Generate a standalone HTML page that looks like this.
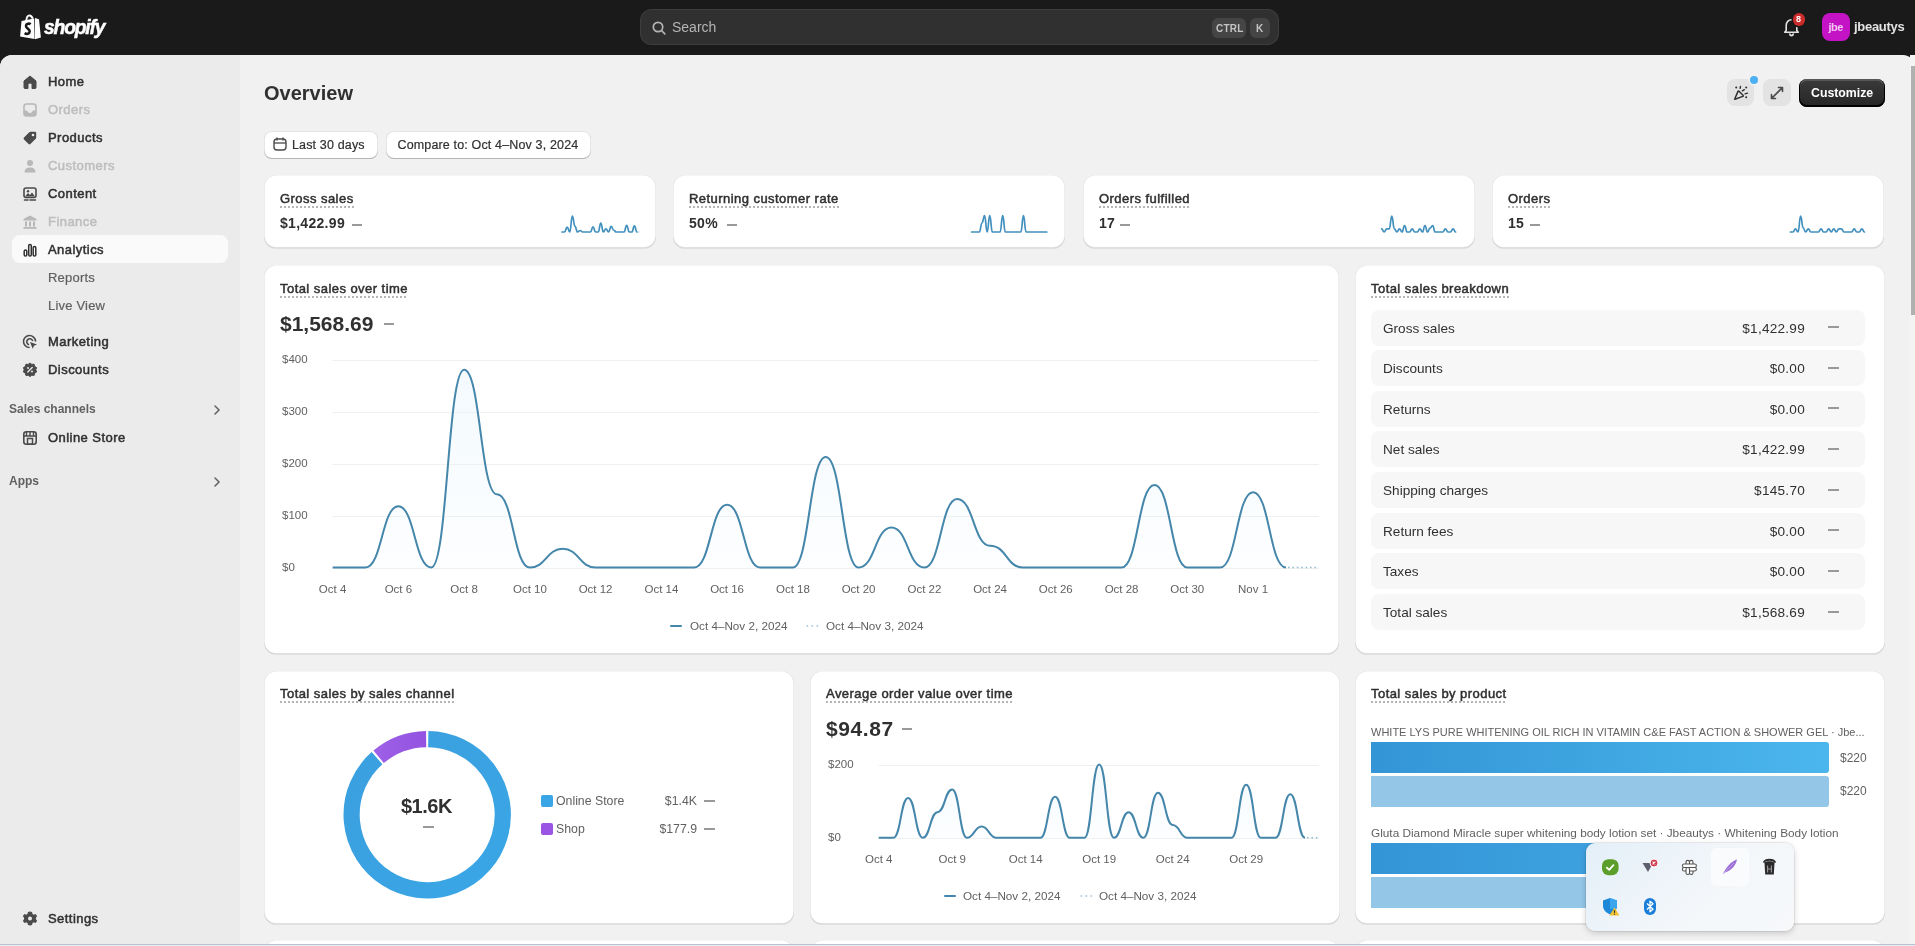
<!DOCTYPE html><html><head><meta charset="utf-8"><style>
*{box-sizing:border-box;margin:0;padding:0}
html,body{width:1915px;height:946px;overflow:hidden;background:#1a1a1a;font-family:"Liberation Sans",sans-serif;color:#303030}
body{will-change:transform}
div,span{position:absolute;white-space:nowrap}
svg{position:absolute;overflow:visible}
#frame{left:0;top:55px;width:1915px;height:891px;background:#f1f1f1;border-radius:12px 12px 0 0;overflow:hidden}
#side{left:0;top:0;width:240px;height:891px;background:#ebebeb}
.nt{font-size:13px;color:#303030;left:48px;-webkit-text-stroke:.5px #303030;letter-spacing:.45px}
.dis{color:#bdbdbd;-webkit-text-stroke:.5px #bdbdbd}
.subn{color:#616161;-webkit-text-stroke:.2px #616161;letter-spacing:.2px}
.card{background:#fff;border-radius:12px;box-shadow:0 1px 0 0 rgba(26,26,26,.08),inset 0 -1px 0 0 rgba(0,0,0,.12),inset 1px 0 0 0 rgba(0,0,0,.07),inset -1px 0 0 0 rgba(0,0,0,.07),inset 0 1px 0 0 rgba(0,0,0,.04)}
.ttl{font-size:13px;color:#303030;-webkit-text-stroke:.5px #303030;letter-spacing:.45px;line-height:15px;height:17px;background-image:linear-gradient(to right,#b5b5b5 2px,transparent 2px);background-size:4px 2px;background-repeat:repeat-x;background-position:0 15px}
.btn{background:#fff;border-radius:8px;font-size:12px;color:#303030;box-shadow:inset 0 -1px 0 0 #b5b5b5,inset 0 0 0 1px rgba(0,0,0,.1)}
.bt{font-size:12.5px;color:#303030;-webkit-text-stroke:.2px #303030;letter-spacing:.15px}
.dash{height:2px;background:#999;width:10px}
.ax{font-size:11.5px;color:#616161}
.brow{background:#f7f7f7;border-radius:8px;height:36px;width:494px;left:16px}

</style></head><body>
<svg style="left:20px;top:14px" width="22" height="26" viewBox="0 0 22 26">
<path d="M1.5,7.1 L14.2,4.5 L14.6,24.9 L0.1,22.6 Z" fill="#fff"/>
<path d="M15,4 L19,5.3 L20.9,23.4 L15,25.2 Z" fill="#fff"/>
<path d="M6.2,7.5 C6.5,3.2 7.8,1.4 9.3,1.4 C10.8,1.4 12,2.4 12.8,4.8" stroke="#fff" stroke-width="2" fill="none"/>
<path d="M8,5 C8.2,3.5 8.6,2.8 9.2,2.8 M10.6,4.5 C10.4,3.5 10.2,3 9.9,2.9" stroke="#555" stroke-width="0.7" fill="none"/>
<path d="M10.6,10.2 C9.6,9.3 6.2,9.1 6,11.9 C5.8,14.6 9.9,14.6 9.7,17.5 C9.5,20.2 6.6,20.4 4.6,19.2" stroke="#1a1a1a" stroke-width="2.6" fill="none"/>
</svg>
<span style="left:44px;top:15px;font-size:21px;font-weight:bold;font-style:italic;color:#fff;letter-spacing:-1.3px;transform:scaleX(0.92);transform-origin:0 0;-webkit-text-stroke:0.5px #fff">shopify</span>
<div style="left:640px;top:9px;width:639px;height:36px;border-radius:12px;background:#303030;box-shadow:inset 0 0 0 1px #3d3d3d"></div>
<svg style="left:652px;top:21px" width="14" height="14" viewBox="0 0 14 14"><circle cx="6" cy="6" r="4.7" stroke="#b5b5b5" stroke-width="1.7" fill="none"/><path d="M9.5,9.5 L12.8,12.8" stroke="#b5b5b5" stroke-width="1.7" stroke-linecap="round"/></svg>
<span style="left:672px;top:19px;font-size:14px;color:#b5b5b5">Search</span>
<div style="left:1212px;top:18px;width:34px;height:20px;border-radius:6px;background:#454545"></div>
<span style="left:1216px;top:23px;font-size:10px;font-weight:bold;color:#c4c4c4;letter-spacing:.2px">CTRL</span>
<div style="left:1250px;top:18px;width:20px;height:20px;border-radius:6px;background:#454545"></div>
<span style="left:1256px;top:23px;font-size:10px;font-weight:bold;color:#c4c4c4">K</span>
<svg style="left:1783px;top:17px" width="18" height="20" viewBox="0 0 18 20"><path d="M3.2,13.5 L3.2,8.5 C3.2,5 5.5,2.8 8.5,2.8 C11.5,2.8 13.8,5 13.8,8.5 L13.8,13.5 L15.3,15.2 L1.7,15.2 Z" stroke="#e3e3e3" stroke-width="1.6" fill="none" stroke-linejoin="round"/><path d="M6.5,16.5 C6.8,18 7.5,18.6 8.5,18.6 C9.5,18.6 10.2,18 10.5,16.5" stroke="#e3e3e3" stroke-width="1.6" fill="none"/></svg>
<div style="left:1793px;top:13px;width:12px;height:13px;border-radius:6px;background:#cc2b2b;box-shadow:0 0 0 1.5px #1a1a1a"></div>
<span style="left:1796px;top:13.5px;font-size:9px;font-weight:bold;color:#fff">8</span>
<div style="left:1822px;top:13px;width:28px;height:28px;border-radius:8px;background:#c413c4"></div>
<span style="left:1828.5px;top:21px;font-size:11px;font-weight:bold;color:#f3c8f3;letter-spacing:-.5px">jbe</span>
<span style="left:1854px;top:19px;font-size:13px;font-weight:bold;color:#e3e3e3;letter-spacing:-.3px">jbeautys</span>
<div id="frame">
<div id="side">
<div style="left:12px;top:180px;width:216px;height:28px;border-radius:8px;background:#fafafa"></div>
<span class="nt " style="top:19px">Home</span>
<svg style="left:22px;top:19px" width="16" height="16" viewBox="0 0 16 16"><path d="M2,7 L8,2 L14,7 L14,13.5 Q14,14.5 13,14.5 L10,14.5 L10,10.5 Q10,9 8,9 Q6,9 6,10.5 L6,14.5 L3,14.5 Q2,14.5 2,13.5 Z" fill="#4a4a4a" stroke="#4a4a4a" stroke-width="1" stroke-linejoin="round"/></svg>
<span class="nt dis" style="top:47px">Orders</span>
<svg style="left:22px;top:47px" width="16" height="16" viewBox="0 0 16 16"><rect x="2" y="2" width="12" height="12" rx="2.5" fill="none" stroke="#b8b8b8" stroke-width="1.6"/><path d="M2,8.5 L5,8.5 Q6,11 8,11 Q10,11 11,8.5 L14,8.5 L14,12 Q14,14 12,14 L4,14 Q2,14 2,12 Z" fill="#b8b8b8"/></svg>
<span class="nt " style="top:75px">Products</span>
<svg style="left:22px;top:75px" width="16" height="16" viewBox="0 0 16 16"><path d="M8.5,1.8 L13,1.8 Q14.2,1.8 14.2,3 L14.2,7.5 Q14.2,8.2 13.7,8.7 L8.4,14 Q7.5,14.9 6.6,14 L2,9.4 Q1.1,8.5 2,7.6 L7.3,2.3 Q7.8,1.8 8.5,1.8 Z" fill="#4a4a4a"/><circle cx="11" cy="5" r="1.3" fill="#ebebeb"/></svg>
<span class="nt dis" style="top:103px">Customers</span>
<svg style="left:22px;top:103px" width="16" height="16" viewBox="0 0 16 16"><circle cx="8" cy="5" r="3" fill="#b8b8b8"/><path d="M2.5,14.5 Q2.5,9.5 8,9.5 Q13.5,9.5 13.5,14.5 Z" fill="#b8b8b8"/></svg>
<span class="nt " style="top:131px">Content</span>
<svg style="left:22px;top:131px" width="16" height="16" viewBox="0 0 16 16"><rect x="2" y="2" width="12" height="9.5" rx="2" fill="none" stroke="#4a4a4a" stroke-width="1.6"/><path d="M3,10.5 L6,7 L8,9 L10,6.5 L13,10.5 Z" fill="#4a4a4a"/><circle cx="6" cy="5.3" r="1.2" fill="#4a4a4a"/><path d="M2.5,14 L6,14 M8,14 L13.5,14" stroke="#4a4a4a" stroke-width="1.6" stroke-linecap="round"/></svg>
<span class="nt dis" style="top:159px">Finance</span>
<svg style="left:22px;top:159px" width="16" height="16" viewBox="0 0 16 16"><path d="M8,1.5 L14.5,5 L14.5,6.5 L1.5,6.5 L1.5,5 Z" fill="#b8b8b8"/><rect x="3" y="7.5" width="2" height="5" fill="#b8b8b8"/><rect x="7" y="7.5" width="2" height="5" fill="#b8b8b8"/><rect x="11" y="7.5" width="2" height="5" fill="#b8b8b8"/><rect x="1.5" y="13" width="13" height="1.8" fill="#b8b8b8"/></svg>
<span class="nt " style="top:187px">Analytics</span>
<svg style="left:22px;top:187px" width="16" height="16" viewBox="0 0 16 16"><rect x="2.2" y="8" width="2.6" height="6" rx="1.3" fill="none" stroke="#303030" stroke-width="1.5"/><rect x="6.7" y="2.5" width="2.6" height="11.5" rx="1.3" fill="none" stroke="#303030" stroke-width="1.5"/><rect x="11.2" y="4.5" width="2.6" height="9.5" rx="1.3" fill="none" stroke="#303030" stroke-width="1.5"/></svg>
<span class="nt subn" style="top:215px">Reports</span>
<span class="nt subn" style="top:243px">Live View</span>
<span class="nt" style="top:279px">Marketing</span>
<svg style="left:22px;top:279px" width="16" height="16" viewBox="0 0 16 16"><path d="M13.5,7 A6,6 0 1 0 7,13.5" fill="none" stroke="#4a4a4a" stroke-width="1.6" stroke-linecap="round"/><path d="M10.5,6.5 A3,3 0 1 0 6.5,10.5" fill="none" stroke="#4a4a4a" stroke-width="1.6" stroke-linecap="round"/><path d="M8,8 L15,10.5 L12,11.7 L10.7,14.8 Z" fill="#4a4a4a"/></svg>
<span class="nt" style="top:307px">Discounts</span>
<svg style="left:22px;top:307px" width="16" height="16" viewBox="0 0 16 16"><path d="M8,1 L9.8,2.4 L12.1,2.2 L12.6,4.4 L14.6,5.6 L13.8,7.8 L14.6,10 L12.6,11.2 L12.1,13.4 L9.8,13.2 L8,14.6 L6.2,13.2 L3.9,13.4 L3.4,11.2 L1.4,10 L2.2,7.8 L1.4,5.6 L3.4,4.4 L3.9,2.2 L6.2,2.4 Z" fill="#4a4a4a" stroke="#4a4a4a" stroke-linejoin="round" stroke-width="1"/><path d="M5.8,10 L10.2,5.6" stroke="#ebebeb" stroke-width="1.4" stroke-linecap="round"/><circle cx="6" cy="6" r="1" fill="#ebebeb"/><circle cx="10" cy="9.6" r="1" fill="#ebebeb"/></svg>
<span style="left:9px;top:347px;font-size:12px;font-weight:bold;color:#616161">Sales channels</span>
<svg style="left:213px;top:349px" width="8" height="12" viewBox="0 0 8 12"><path d="M2,2 L6,6 L2,10" stroke="#616161" stroke-width="1.5" fill="none" stroke-linecap="round"/></svg>
<span class="nt" style="top:375px">Online Store</span>
<svg style="left:22px;top:375px" width="16" height="16" viewBox="0 0 16 16"><rect x="1.8" y="1.8" width="12.4" height="12.4" rx="2.5" fill="none" stroke="#4a4a4a" stroke-width="1.6"/><path d="M1.8,6 L14.2,6 M4.5,2 L4.5,6 M8,2 L8,6 M11.5,2 L11.5,6" stroke="#4a4a4a" stroke-width="1.4"/><rect x="5.5" y="8.5" width="5" height="5.7" fill="none" stroke="#4a4a4a" stroke-width="1.5"/></svg>
<span style="left:9px;top:419px;font-size:12px;font-weight:bold;color:#616161">Apps</span>
<svg style="left:213px;top:421px" width="8" height="12" viewBox="0 0 8 12"><path d="M2,2 L6,6 L2,10" stroke="#616161" stroke-width="1.5" fill="none" stroke-linecap="round"/></svg>
<span class="nt" style="top:856px">Settings</span>
<svg style="left:22px;top:856px" width="16" height="16" viewBox="0 0 16 16"><path d="M8,1 L9.6,1.6 L10,3.4 L11.6,4.3 L13.3,3.7 L14.4,5.1 L13.3,6.6 L13.3,8.4 L14.4,9.9 L13.3,11.3 L11.6,10.7 L10,11.6 L9.6,13.4 L8,14 L6.4,13.4 L6,11.6 L4.4,10.7 L2.7,11.3 L1.6,9.9 L2.7,8.4 L2.7,6.6 L1.6,5.1 L2.7,3.7 L4.4,4.3 L6,3.4 L6.4,1.6 Z" fill="#4a4a4a" stroke="#4a4a4a" stroke-width="1.2" stroke-linejoin="round"/><circle cx="8" cy="7.5" r="2" fill="#ebebeb"/></svg>
</div>
</div>
<span style="left:264px;top:82px;font-size:20px;font-weight:bold;color:#303030">Overview</span>
<div class="btn" style="left:264px;top:131px;width:113.5px;height:27.5px"></div>
<svg style="left:273px;top:137px" width="14" height="14" viewBox="0 0 14 14"><rect x="1" y="2" width="12" height="11" rx="3" fill="none" stroke="#4a4a4a" stroke-width="1.4"/><path d="M1,6 L13,6" stroke="#4a4a4a" stroke-width="1.3"/><path d="M4,1 L4,3 M10,1 L10,3" stroke="#4a4a4a" stroke-width="1.4" stroke-linecap="round"/></svg>
<span class="bt" style="left:292px;top:138px">Last 30 days</span>
<div class="btn" style="left:386px;top:131px;width:205px;height:27.5px"></div>
<span class="bt" style="left:397.5px;top:138px">Compare to: Oct 4–Nov 3, 2024</span>
<div style="left:1727px;top:79px;width:27px;height:27px;border-radius:8px;background:#e3e3e3"></div>
<svg style="left:1732px;top:84px" width="17" height="17" viewBox="0 0 17 17"><path d="M2.8,14.8 Q2.2,15.4 3,15.2 L10.8,12.4 Q11.8,12 11,11.2 L7,7.2 Q6.3,6.5 6,7.4 Z" fill="none" stroke="#303030" stroke-width="1.5" stroke-linejoin="round"/><circle cx="4.2" cy="3.6" r="1" fill="#303030"/><circle cx="14.2" cy="3.6" r="1" fill="#303030"/><circle cx="14.2" cy="13.3" r="1" fill="#303030"/><path d="M8.5,2.4 L8.1,4.4 M10.4,6.9 L12.3,5.7 M13.1,9.9 L15.5,9.2" stroke="#303030" stroke-width="1.4" stroke-linecap="round"/></svg>
<div style="left:1749.8px;top:76px;width:8px;height:8px;border-radius:4px;background:#4db0f5;box-shadow:0 0 0 1.5px #f1f1f1"></div>
<div style="left:1763px;top:79px;width:28px;height:27px;border-radius:8px;background:#e3e3e3"></div>
<svg style="left:1769px;top:85px" width="16" height="16" viewBox="0 0 16 16"><path d="M9.5,2.5 L13.5,2.5 L13.5,6.5 M13.5,2.5 L2.5,13.5 M2.5,9.5 L2.5,13.5 L6.5,13.5" fill="none" stroke="#4a4a4a" stroke-width="1.6" stroke-linecap="round" stroke-linejoin="round"/></svg>
<div style="left:1799px;top:79px;width:86px;height:28px;border-radius:8px;background:linear-gradient(#3a3a3a,#262626);box-shadow:inset 0 -1px 0 1px #000,inset 0 1px 0 1px rgba(255,255,255,.15)"></div>
<span style="left:1811px;top:86px;font-size:12.3px;font-weight:bold;color:#fff">Customize</span>
<div class="card" style="left:264px;top:175px;width:392px;height:73px"></div>
<span class="ttl" style="left:280px;top:191px">Gross sales</span>
<span style="left:280px;top:215px;font-size:14px;font-weight:bold;color:#303030;letter-spacing:.3px">$1,422.99</span>
<div class="card" style="left:673px;top:175px;width:392px;height:73px"></div>
<span class="ttl" style="left:689px;top:191px">Returning customer rate</span>
<span style="left:689px;top:215px;font-size:14px;font-weight:bold;color:#303030;letter-spacing:.3px">50%</span>
<div class="card" style="left:1083px;top:175px;width:392px;height:73px"></div>
<span class="ttl" style="left:1099px;top:191px">Orders fulfilled</span>
<span style="left:1099px;top:215px;font-size:14px;font-weight:bold;color:#303030;letter-spacing:.3px">17</span>
<div class="card" style="left:1492px;top:175px;width:392px;height:73px"></div>
<span class="ttl" style="left:1508px;top:191px">Orders</span>
<span style="left:1508px;top:215px;font-size:14px;font-weight:bold;color:#303030;letter-spacing:.3px">15</span>
<span id="kd0" class="dash" style="left:352px;top:223.5px"></span>
<span class="dash" style="left:727px;top:223.5px"></span>
<span class="dash" style="left:1120px;top:223.5px"></span>
<span class="dash" style="left:1530px;top:223.5px"></span>
<svg style="left:0;top:0" width="1" height="1"><path d="M562.00,232.00 C563.29,232.00 563.29,232.00 564.59,232.00 C565.88,232.00 565.88,227.04 567.17,227.04 C568.47,227.04 568.47,232.00 569.76,232.00 C571.05,232.00 571.05,216.00 572.34,216.00 C573.64,216.00 573.64,226.08 574.93,226.08 C576.22,226.08 576.22,232.00 577.52,232.00 C578.81,232.00 578.81,230.49 580.10,230.49 C581.40,230.49 581.40,232.00 582.69,232.00 C583.98,232.00 583.98,232.00 585.28,232.00 C586.57,232.00 586.57,232.00 587.86,232.00 C589.16,232.00 589.16,232.00 590.45,232.00 C591.74,232.00 591.74,226.92 593.03,226.92 C594.33,226.92 594.33,232.00 595.62,232.00 C596.91,232.00 596.91,232.00 598.21,232.00 C599.50,232.00 599.50,223.06 600.79,223.06 C602.09,223.06 602.09,232.00 603.38,232.00 C604.67,232.00 604.67,228.77 605.97,228.77 C607.26,228.77 607.26,232.00 608.55,232.00 C609.84,232.00 609.84,226.46 611.14,226.46 C612.43,226.46 612.43,230.24 613.72,230.24 C615.02,230.24 615.02,232.00 616.31,232.00 C617.60,232.00 617.60,232.00 618.90,232.00 C620.19,232.00 620.19,232.00 621.48,232.00 C622.78,232.00 622.78,232.00 624.07,232.00 C625.36,232.00 625.36,225.32 626.66,225.32 C627.95,225.32 627.95,232.00 629.24,232.00 C630.53,232.00 630.53,232.00 631.83,232.00 C633.12,232.00 633.12,225.91 634.41,225.91 C635.71,225.91 635.71,232.00 637.00,232.00" fill="none" stroke="#4290bd" stroke-width="1.7" stroke-linejoin="round" stroke-linecap="round"/><path d="M638.5,232.0 L641.0,232.0" stroke="#9cc4da" stroke-width="1.2" stroke-dasharray="1 2"/></svg>
<svg style="left:0;top:0" width="1" height="1"><path d="M971.60,232.00 C972.90,232.00 972.90,232.00 974.19,232.00 C975.49,232.00 975.49,232.00 976.79,232.00 C978.08,232.00 978.08,232.00 979.38,232.00 C980.68,232.00 980.68,222.98 981.97,222.98 C983.27,222.98 983.27,215.60 984.57,215.60 C985.86,215.60 985.86,232.00 987.16,232.00 C988.46,232.00 988.46,215.60 989.75,215.60 C991.05,215.60 991.05,232.00 992.34,232.00 C993.64,232.00 993.64,232.00 994.94,232.00 C996.23,232.00 996.23,232.00 997.53,232.00 C998.83,232.00 998.83,232.00 1000.12,232.00 C1001.42,232.00 1001.42,215.60 1002.72,215.60 C1004.01,215.60 1004.01,232.00 1005.31,232.00 C1006.61,232.00 1006.61,232.00 1007.90,232.00 C1009.20,232.00 1009.20,232.00 1010.50,232.00 C1011.79,232.00 1011.79,232.00 1013.09,232.00 C1014.39,232.00 1014.39,232.00 1015.68,232.00 C1016.98,232.00 1016.98,232.00 1018.28,232.00 C1019.57,232.00 1019.57,232.00 1020.87,232.00 C1022.17,232.00 1022.17,215.60 1023.46,215.60 C1024.76,215.60 1024.76,232.00 1026.06,232.00 C1027.35,232.00 1027.35,232.00 1028.65,232.00 C1029.94,232.00 1029.94,232.00 1031.24,232.00 C1032.54,232.00 1032.54,232.00 1033.83,232.00 C1035.13,232.00 1035.13,232.00 1036.43,232.00 C1037.72,232.00 1037.72,232.00 1039.02,232.00 C1040.32,232.00 1040.32,232.00 1041.61,232.00 C1042.91,232.00 1042.91,232.00 1044.21,232.00 C1045.50,232.00 1045.50,232.00 1046.80,232.00" fill="none" stroke="#4290bd" stroke-width="1.7" stroke-linejoin="round" stroke-linecap="round"/></svg>
<svg style="left:0;top:0" width="1" height="1"><path d="M1381.60,228.80 C1382.88,228.80 1382.88,232.00 1384.15,232.00 C1385.43,232.00 1385.43,228.80 1386.70,228.80 C1387.98,228.80 1387.98,228.80 1389.26,228.80 C1390.53,228.80 1390.53,216.00 1391.81,216.00 C1393.08,216.00 1393.08,228.80 1394.36,228.80 C1395.63,228.80 1395.63,232.00 1396.91,232.00 C1398.19,232.00 1398.19,228.80 1399.46,228.80 C1400.74,228.80 1400.74,232.00 1402.01,232.00 C1403.29,232.00 1403.29,225.60 1404.57,225.60 C1405.84,225.60 1405.84,232.00 1407.12,232.00 C1408.39,232.00 1408.39,232.00 1409.67,232.00 C1410.94,232.00 1410.94,228.80 1412.22,228.80 C1413.50,228.80 1413.50,232.00 1414.77,232.00 C1416.05,232.00 1416.05,232.00 1417.32,232.00 C1418.60,232.00 1418.60,228.80 1419.88,228.80 C1421.15,228.80 1421.15,232.00 1422.43,232.00 C1423.70,232.00 1423.70,225.60 1424.98,225.60 C1426.26,225.60 1426.26,232.00 1427.53,232.00 C1428.81,232.00 1428.81,228.16 1430.08,228.16 C1431.36,228.16 1431.36,225.60 1432.63,225.60 C1433.91,225.60 1433.91,232.00 1435.19,232.00 C1436.46,232.00 1436.46,232.00 1437.74,232.00 C1439.01,232.00 1439.01,232.00 1440.29,232.00 C1441.57,232.00 1441.57,232.00 1442.84,232.00 C1444.12,232.00 1444.12,228.80 1445.39,228.80 C1446.67,228.80 1446.67,232.00 1447.94,232.00 C1449.22,232.00 1449.22,232.00 1450.50,232.00 C1451.77,232.00 1451.77,228.80 1453.05,228.80 C1454.32,228.80 1454.32,232.00 1455.60,232.00" fill="none" stroke="#4290bd" stroke-width="1.7" stroke-linejoin="round" stroke-linecap="round"/></svg>
<svg style="left:0;top:0" width="1" height="1"><path d="M1790.40,232.00 C1791.68,232.00 1791.68,232.00 1792.95,232.00 C1794.23,232.00 1794.23,228.80 1795.50,228.80 C1796.78,228.80 1796.78,232.00 1798.06,232.00 C1799.33,232.00 1799.33,216.00 1800.61,216.00 C1801.88,216.00 1801.88,227.84 1803.16,227.84 C1804.43,227.84 1804.43,232.00 1805.71,232.00 C1806.99,232.00 1806.99,228.80 1808.26,228.80 C1809.54,228.80 1809.54,232.00 1810.81,232.00 C1812.09,232.00 1812.09,232.00 1813.37,232.00 C1814.64,232.00 1814.64,232.00 1815.92,232.00 C1817.19,232.00 1817.19,232.00 1818.47,232.00 C1819.74,232.00 1819.74,228.80 1821.02,228.80 C1822.30,228.80 1822.30,232.00 1823.57,232.00 C1824.85,232.00 1824.85,232.00 1826.12,232.00 C1827.40,232.00 1827.40,228.80 1828.68,228.80 C1829.95,228.80 1829.95,232.00 1831.23,232.00 C1832.50,232.00 1832.50,228.80 1833.78,228.80 C1835.06,228.80 1835.06,232.00 1836.33,232.00 C1837.61,232.00 1837.61,228.80 1838.88,228.80 C1840.16,228.80 1840.16,228.80 1841.43,228.80 C1842.71,228.80 1842.71,232.00 1843.99,232.00 C1845.26,232.00 1845.26,232.00 1846.54,232.00 C1847.81,232.00 1847.81,232.00 1849.09,232.00 C1850.37,232.00 1850.37,232.00 1851.64,232.00 C1852.92,232.00 1852.92,228.80 1854.19,228.80 C1855.47,228.80 1855.47,232.00 1856.74,232.00 C1858.02,232.00 1858.02,232.00 1859.30,232.00 C1860.57,232.00 1860.57,228.80 1861.85,228.80 C1863.12,228.80 1863.12,232.00 1864.40,232.00" fill="none" stroke="#4290bd" stroke-width="1.7" stroke-linejoin="round" stroke-linecap="round"/></svg>
<div class="card" style="left:264px;top:265px;width:1074.5px;height:388.5px"></div>
<span class="ttl" style="left:280px;top:281px">Total sales over time</span>
<span style="left:280px;top:312px;font-size:21px;font-weight:bold;color:#303030">$1,568.69</span>
<span class="dash" style="left:384px;top:323px"></span>
<svg style="left:0;top:0" width="1" height="1"><defs><linearGradient id="fg" x1="0" y1="0" x2="0" y2="1"><stop offset="0" stop-color="#e3f2fb" stop-opacity="0.42"/><stop offset="1" stop-color="#e3f2fb" stop-opacity="0.08"/></linearGradient></defs><path d="M332.6,360.5 L1319,360.5" stroke="#f0f0f0" stroke-width="1"/><path d="M332.6,412.5 L1319,412.5" stroke="#f0f0f0" stroke-width="1"/><path d="M332.6,464.5 L1319,464.5" stroke="#f0f0f0" stroke-width="1"/><path d="M332.6,516.5 L1319,516.5" stroke="#f0f0f0" stroke-width="1"/><path d="M332.6,568.5 L1319,568.5" stroke="#f0f0f0" stroke-width="1"/><path d="M332.60,567.50 C349.04,567.50 349.04,567.50 365.48,567.50 C381.91,567.50 381.91,506.28 398.35,506.28 C414.79,506.28 414.79,567.50 431.23,567.50 C447.66,567.50 447.66,369.84 464.10,369.84 C480.54,369.84 480.54,494.35 496.98,494.35 C513.41,494.35 513.41,567.50 529.85,567.50 C546.29,567.50 546.29,548.82 562.73,548.82 C579.16,548.82 579.16,567.50 595.60,567.50 C612.04,567.50 612.04,567.50 628.48,567.50 C644.91,567.50 644.91,567.50 661.35,567.50 C677.79,567.50 677.79,567.50 694.23,567.50 C710.66,567.50 710.66,504.73 727.10,504.73 C743.54,504.73 743.54,567.50 759.98,567.50 C776.41,567.50 776.41,567.50 792.85,567.50 C809.29,567.50 809.29,457.00 825.73,457.00 C842.16,457.00 842.16,567.50 858.60,567.50 C875.04,567.50 875.04,527.55 891.48,527.55 C907.91,527.55 907.91,567.50 924.35,567.50 C940.79,567.50 940.79,499.02 957.23,499.02 C973.66,499.02 973.66,545.71 990.10,545.71 C1006.54,545.71 1006.54,567.50 1022.98,567.50 C1039.41,567.50 1039.41,567.50 1055.85,567.50 C1072.29,567.50 1072.29,567.50 1088.72,567.50 C1105.16,567.50 1105.16,567.50 1121.60,567.50 C1138.04,567.50 1138.04,485.01 1154.47,485.01 C1170.91,485.01 1170.91,567.50 1187.35,567.50 C1203.79,567.50 1203.79,567.50 1220.22,567.50 C1236.66,567.50 1236.66,492.27 1253.10,492.27 C1269.54,492.27 1269.54,567.50 1285.97,567.50 L1285.97,567.50 L332.60,567.50 Z" fill="url(#fg)"/><path d="M332.60,567.50 C349.04,567.50 349.04,567.50 365.48,567.50 C381.91,567.50 381.91,506.28 398.35,506.28 C414.79,506.28 414.79,567.50 431.23,567.50 C447.66,567.50 447.66,369.84 464.10,369.84 C480.54,369.84 480.54,494.35 496.98,494.35 C513.41,494.35 513.41,567.50 529.85,567.50 C546.29,567.50 546.29,548.82 562.73,548.82 C579.16,548.82 579.16,567.50 595.60,567.50 C612.04,567.50 612.04,567.50 628.48,567.50 C644.91,567.50 644.91,567.50 661.35,567.50 C677.79,567.50 677.79,567.50 694.23,567.50 C710.66,567.50 710.66,504.73 727.10,504.73 C743.54,504.73 743.54,567.50 759.98,567.50 C776.41,567.50 776.41,567.50 792.85,567.50 C809.29,567.50 809.29,457.00 825.73,457.00 C842.16,457.00 842.16,567.50 858.60,567.50 C875.04,567.50 875.04,527.55 891.48,527.55 C907.91,527.55 907.91,567.50 924.35,567.50 C940.79,567.50 940.79,499.02 957.23,499.02 C973.66,499.02 973.66,545.71 990.10,545.71 C1006.54,545.71 1006.54,567.50 1022.98,567.50 C1039.41,567.50 1039.41,567.50 1055.85,567.50 C1072.29,567.50 1072.29,567.50 1088.72,567.50 C1105.16,567.50 1105.16,567.50 1121.60,567.50 C1138.04,567.50 1138.04,485.01 1154.47,485.01 C1170.91,485.01 1170.91,567.50 1187.35,567.50 C1203.79,567.50 1203.79,567.50 1220.22,567.50 C1236.66,567.50 1236.66,492.27 1253.10,492.27 C1269.54,492.27 1269.54,567.50 1285.97,567.50" fill="none" stroke="#4586ab" stroke-width="2"/><path d="M1288.0,567.5 L1319,567.5" stroke="#8fbcd6" stroke-width="1.6" stroke-dasharray="1.6 2.8"/></svg>
<span class="ax" style="left:282px;top:353.0px">$400</span>
<span class="ax" style="left:282px;top:404.9px">$300</span>
<span class="ax" style="left:282px;top:456.7px">$200</span>
<span class="ax" style="left:282px;top:508.6px">$100</span>
<span class="ax" style="left:282px;top:560.5px">$0</span>
<span class="ax" style="left:302.6px;top:583px;width:60px;text-align:center">Oct 4</span>
<span class="ax" style="left:368.4px;top:583px;width:60px;text-align:center">Oct 6</span>
<span class="ax" style="left:434.1px;top:583px;width:60px;text-align:center">Oct 8</span>
<span class="ax" style="left:499.9px;top:583px;width:60px;text-align:center">Oct 10</span>
<span class="ax" style="left:565.6px;top:583px;width:60px;text-align:center">Oct 12</span>
<span class="ax" style="left:631.4px;top:583px;width:60px;text-align:center">Oct 14</span>
<span class="ax" style="left:697.1px;top:583px;width:60px;text-align:center">Oct 16</span>
<span class="ax" style="left:762.9px;top:583px;width:60px;text-align:center">Oct 18</span>
<span class="ax" style="left:828.6px;top:583px;width:60px;text-align:center">Oct 20</span>
<span class="ax" style="left:894.4px;top:583px;width:60px;text-align:center">Oct 22</span>
<span class="ax" style="left:960.1px;top:583px;width:60px;text-align:center">Oct 24</span>
<span class="ax" style="left:1025.8px;top:583px;width:60px;text-align:center">Oct 26</span>
<span class="ax" style="left:1091.6px;top:583px;width:60px;text-align:center">Oct 28</span>
<span class="ax" style="left:1157.3px;top:583px;width:60px;text-align:center">Oct 30</span>
<span class="ax" style="left:1223.1px;top:583px;width:60px;text-align:center">Nov 1</span>
<div style="left:670px;top:625px;width:12px;height:2px;border-radius:1px;background:#4586ab"></div>
<span style="left:690px;top:619px;font-size:11.7px;color:#616161">Oct 4–Nov 2, 2024</span>
<svg style="left:806px;top:625px" width="14" height="2"><path d="M0.5,1 L14,1" stroke="#9cc4da" stroke-width="1.6" stroke-dasharray="1.6 3.4"/></svg>
<span style="left:826px;top:619px;font-size:11.7px;color:#616161">Oct 4–Nov 3, 2024</span>
<div class="card" style="left:1355px;top:265px;width:529.5px;height:388.5px"></div>
<span class="ttl" style="left:1371px;top:281px">Total sales breakdown</span>
<div class="brow" style="left:1371px;top:309.5px"></div>
<span style="left:1383px;top:320.5px;font-size:13.6px;color:#303030">Gross sales</span>
<span style="left:1605px;width:200px;text-align:right;top:320.5px;font-size:13.6px;color:#303030;letter-spacing:.25px">$1,422.99</span>
<span class="dash" style="left:1828px;top:326px;width:11px"></span>
<div class="brow" style="left:1371px;top:350.1px"></div>
<span style="left:1383px;top:361.1px;font-size:13.6px;color:#303030">Discounts</span>
<span style="left:1605px;width:200px;text-align:right;top:361.1px;font-size:13.6px;color:#303030;letter-spacing:.25px">$0.00</span>
<span class="dash" style="left:1828px;top:367px;width:11px"></span>
<div class="brow" style="left:1371px;top:390.8px"></div>
<span style="left:1383px;top:401.8px;font-size:13.6px;color:#303030">Returns</span>
<span style="left:1605px;width:200px;text-align:right;top:401.8px;font-size:13.6px;color:#303030;letter-spacing:.25px">$0.00</span>
<span class="dash" style="left:1828px;top:407px;width:11px"></span>
<div class="brow" style="left:1371px;top:431.4px"></div>
<span style="left:1383px;top:442.4px;font-size:13.6px;color:#303030">Net sales</span>
<span style="left:1605px;width:200px;text-align:right;top:442.4px;font-size:13.6px;color:#303030;letter-spacing:.25px">$1,422.99</span>
<span class="dash" style="left:1828px;top:448px;width:11px"></span>
<div class="brow" style="left:1371px;top:472.1px"></div>
<span style="left:1383px;top:483.1px;font-size:13.6px;color:#303030">Shipping charges</span>
<span style="left:1605px;width:200px;text-align:right;top:483.1px;font-size:13.6px;color:#303030;letter-spacing:.25px">$145.70</span>
<span class="dash" style="left:1828px;top:489px;width:11px"></span>
<div class="brow" style="left:1371px;top:512.8px"></div>
<span style="left:1383px;top:523.8px;font-size:13.6px;color:#303030">Return fees</span>
<span style="left:1605px;width:200px;text-align:right;top:523.8px;font-size:13.6px;color:#303030;letter-spacing:.25px">$0.00</span>
<span class="dash" style="left:1828px;top:529px;width:11px"></span>
<div class="brow" style="left:1371px;top:553.4px"></div>
<span style="left:1383px;top:564.4px;font-size:13.6px;color:#303030">Taxes</span>
<span style="left:1605px;width:200px;text-align:right;top:564.4px;font-size:13.6px;color:#303030;letter-spacing:.25px">$0.00</span>
<span class="dash" style="left:1828px;top:570px;width:11px"></span>
<div class="brow" style="left:1371px;top:594.0px"></div>
<span style="left:1383px;top:605.0px;font-size:13.6px;color:#303030">Total sales</span>
<span style="left:1605px;width:200px;text-align:right;top:605.0px;font-size:13.6px;color:#303030;letter-spacing:.25px">$1,568.69</span>
<span class="dash" style="left:1828px;top:611px;width:11px"></span>
<div class="card" style="left:264px;top:670.5px;width:529.5px;height:253px"></div>
<div class="card" style="left:264px;top:940px;width:529.5px;height:100px"></div>
<div class="card" style="left:810px;top:670.5px;width:529.5px;height:253px"></div>
<div class="card" style="left:810px;top:940px;width:529.5px;height:100px"></div>
<div class="card" style="left:1355px;top:670.5px;width:529.5px;height:253px"></div>
<div class="card" style="left:1355px;top:940px;width:529.5px;height:100px"></div>
<span class="ttl" style="left:280px;top:686px">Total sales by sales channel</span>
<svg style="left:0;top:0" width="1" height="1"><defs><linearGradient id="dg" x1="0" y1="0" x2="1" y2="1" gradientUnits="objectBoundingBox"><stop offset="0" stop-color="#3b9fde"/><stop offset="1" stop-color="#3aa6e6"/></linearGradient><linearGradient id="pg" x1="0" y1="0" x2="1" y2="0"><stop offset="0" stop-color="#9c5fe6"/><stop offset="1" stop-color="#9452e0"/></linearGradient></defs><path d="M428.26,739.11 A75.60,75.60 0 1 1 377.01,758.17" fill="none" stroke="url(#dg)" stroke-width="16.2"/><path d="M378.61,756.79 A75.60,75.60 0 0 1 426.14,739.11" fill="none" stroke="url(#pg)" stroke-width="16.2"/></svg>
<span style="left:401px;top:795px;font-size:20px;font-weight:bold;color:#303030;letter-spacing:-.5px">$1.6K</span>
<span class="dash" style="left:423px;top:826px;width:11px"></span>
<div style="left:541px;top:794.5px;width:12px;height:12px;border-radius:2px;background:#3aa5e4"></div>
<span style="left:556px;top:793.5px;font-size:12.3px;color:#616161">Online Store</span>
<span style="left:597px;width:100px;text-align:right;top:793.5px;font-size:12.3px;color:#616161">$1.4K</span>
<span class="dash" style="left:704px;top:800px;width:11px"></span>
<div style="left:541px;top:822.5px;width:12px;height:12px;border-radius:2px;background:#9a55e4"></div>
<span style="left:556px;top:821.5px;font-size:12.3px;color:#616161">Shop</span>
<span style="left:597px;width:100px;text-align:right;top:821.5px;font-size:12.3px;color:#616161">$177.9</span>
<span class="dash" style="left:704px;top:828px;width:11px"></span>
<span class="ttl" style="left:826px;top:686px">Average order value over time</span>
<span style="left:826px;top:717px;font-size:21px;font-weight:bold;color:#303030;letter-spacing:.6px">$94.87</span>
<span class="dash" style="left:902px;top:728px"></span>
<svg style="left:0;top:0" width="1" height="1"><path d="M878.7,765.5 L1319,765.5" stroke="#f0f0f0" stroke-width="1"/><path d="M878.7,838.5 L1319,838.5" stroke="#f0f0f0" stroke-width="1"/><path d="M878.70,837.80 C886.05,837.80 886.05,837.80 893.40,837.80 C900.75,837.80 900.75,797.91 908.10,797.91 C915.45,797.91 915.45,837.80 922.80,837.80 C930.15,837.80 930.15,812.18 937.50,812.18 C944.85,812.18 944.85,789.49 952.20,789.49 C959.55,789.49 959.55,837.80 966.90,837.80 C974.25,837.80 974.25,826.45 981.60,826.45 C988.95,826.45 988.95,837.80 996.30,837.80 C1003.65,837.80 1003.65,837.80 1011.00,837.80 C1018.35,837.80 1018.35,837.80 1025.70,837.80 C1033.05,837.80 1033.05,837.80 1040.40,837.80 C1047.75,837.80 1047.75,796.81 1055.10,796.81 C1062.45,796.81 1062.45,837.80 1069.80,837.80 C1077.15,837.80 1077.15,837.80 1084.50,837.80 C1091.85,837.80 1091.85,764.60 1099.20,764.60 C1106.55,764.60 1106.55,837.80 1113.90,837.80 C1121.25,837.80 1121.25,812.18 1128.60,812.18 C1135.95,812.18 1135.95,837.80 1143.30,837.80 C1150.65,837.80 1150.65,792.78 1158.00,792.78 C1165.35,792.78 1165.35,824.99 1172.70,824.99 C1180.05,824.99 1180.05,837.80 1187.40,837.80 C1194.75,837.80 1194.75,837.80 1202.10,837.80 C1209.45,837.80 1209.45,837.80 1216.80,837.80 C1224.15,837.80 1224.15,837.80 1231.50,837.80 C1238.85,837.80 1238.85,784.73 1246.20,784.73 C1253.55,784.73 1253.55,837.80 1260.90,837.80 C1268.25,837.80 1268.25,837.80 1275.60,837.80 C1282.95,837.80 1282.95,794.25 1290.30,794.25 C1297.65,794.25 1297.65,837.80 1305.00,837.80 L1305.00,837.80 L878.70,837.80 Z" fill="url(#fg)"/><path d="M878.70,837.80 C886.05,837.80 886.05,837.80 893.40,837.80 C900.75,837.80 900.75,797.91 908.10,797.91 C915.45,797.91 915.45,837.80 922.80,837.80 C930.15,837.80 930.15,812.18 937.50,812.18 C944.85,812.18 944.85,789.49 952.20,789.49 C959.55,789.49 959.55,837.80 966.90,837.80 C974.25,837.80 974.25,826.45 981.60,826.45 C988.95,826.45 988.95,837.80 996.30,837.80 C1003.65,837.80 1003.65,837.80 1011.00,837.80 C1018.35,837.80 1018.35,837.80 1025.70,837.80 C1033.05,837.80 1033.05,837.80 1040.40,837.80 C1047.75,837.80 1047.75,796.81 1055.10,796.81 C1062.45,796.81 1062.45,837.80 1069.80,837.80 C1077.15,837.80 1077.15,837.80 1084.50,837.80 C1091.85,837.80 1091.85,764.60 1099.20,764.60 C1106.55,764.60 1106.55,837.80 1113.90,837.80 C1121.25,837.80 1121.25,812.18 1128.60,812.18 C1135.95,812.18 1135.95,837.80 1143.30,837.80 C1150.65,837.80 1150.65,792.78 1158.00,792.78 C1165.35,792.78 1165.35,824.99 1172.70,824.99 C1180.05,824.99 1180.05,837.80 1187.40,837.80 C1194.75,837.80 1194.75,837.80 1202.10,837.80 C1209.45,837.80 1209.45,837.80 1216.80,837.80 C1224.15,837.80 1224.15,837.80 1231.50,837.80 C1238.85,837.80 1238.85,784.73 1246.20,784.73 C1253.55,784.73 1253.55,837.80 1260.90,837.80 C1268.25,837.80 1268.25,837.80 1275.60,837.80 C1282.95,837.80 1282.95,794.25 1290.30,794.25 C1297.65,794.25 1297.65,837.80 1305.00,837.80" fill="none" stroke="#4586ab" stroke-width="2"/><path d="M1307.0,837.8 L1318,837.8" stroke="#8fbcd6" stroke-width="1.6" stroke-dasharray="1.6 2.8"/></svg>
<span class="ax" style="left:828px;top:757.6px">$200</span>
<span class="ax" style="left:828px;top:830.8px">$0</span>
<span class="ax" style="left:848.7px;top:853px;width:60px;text-align:center">Oct 4</span>
<span class="ax" style="left:922.2px;top:853px;width:60px;text-align:center">Oct 9</span>
<span class="ax" style="left:995.7px;top:853px;width:60px;text-align:center">Oct 14</span>
<span class="ax" style="left:1069.2px;top:853px;width:60px;text-align:center">Oct 19</span>
<span class="ax" style="left:1142.7px;top:853px;width:60px;text-align:center">Oct 24</span>
<span class="ax" style="left:1216.2px;top:853px;width:60px;text-align:center">Oct 29</span>
<div style="left:944px;top:895px;width:12px;height:2px;border-radius:1px;background:#4586ab"></div>
<span style="left:963px;top:889px;font-size:11.7px;color:#616161">Oct 4–Nov 2, 2024</span>
<svg style="left:1080px;top:895px" width="14" height="2"><path d="M0.5,1 L14,1" stroke="#9cc4da" stroke-width="1.6" stroke-dasharray="1.6 3.4"/></svg>
<span style="left:1099px;top:889px;font-size:11.7px;color:#616161">Oct 4–Nov 3, 2024</span>
<span class="ttl" style="left:1371px;top:686px">Total sales by product</span>
<span style="left:1371px;top:726px;font-size:11px;color:#616161">WHITE LYS PURE WHITENING OIL RICH IN VITAMIN C&amp;E FAST ACTION &amp; SHOWER GEL · Jbe...</span>
<div style="left:1371px;top:742px;width:458px;height:31px;border-radius:0 3px 3px 0;background:linear-gradient(to right,#3395d6,#4bb6ec)"></div>
<div style="left:1371px;top:775.5px;width:458px;height:31px;border-radius:0 3px 3px 0;background:#93c6e7"></div>
<span style="left:1840px;top:751px;font-size:12px;color:#616161">$220</span>
<span style="left:1840px;top:784px;font-size:12px;color:#616161">$220</span>
<span style="left:1371px;top:827px;font-size:11.8px;color:#616161;margin-top:-1px">Gluta Diamond Miracle super whitening body lotion set · Jbeautys · Whitening Body lotion</span>
<div style="left:1371px;top:843px;width:390px;height:31px;border-radius:0 3px 3px 0;background:linear-gradient(to right,#3395d6,#45aae6)"></div>
<div style="left:1371px;top:876.5px;width:390px;height:31px;border-radius:0 3px 3px 0;background:#93c6e7"></div>
<div style="left:1586px;top:843px;width:208px;height:88px;border-radius:9px;background:linear-gradient(135deg,#e3eff8,#f4f7fa 60%,#f6f8fa);box-shadow:0 2px 6px rgba(0,0,0,.18),0 0 0 1px rgba(0,0,0,.06)"></div>
<div style="left:1711px;top:848px;width:38px;height:38px;border-radius:5px;background:#fafbfc"></div>
<svg style="left:1601px;top:858px" width="18" height="18" viewBox="0 0 18 18"><rect x="1" y="1.2" width="16.6" height="16" rx="6.5" fill="#5b9e2a"/><path d="M5.8,9.6 L8.2,11.8 L12.4,7.2" stroke="#fff" stroke-width="1.8" fill="none" stroke-linecap="round" stroke-linejoin="round"/></svg>
<svg style="left:1641px;top:858px" width="20" height="18" viewBox="0 0 20 18"><path d="M1.5,5 L12,5 L7,14 Z" fill="#5e5e6e"/><circle cx="13" cy="5" r="4" fill="#d23a4f" stroke="#fff" stroke-width="1"/><path d="M11.6,3.6 L14.4,6.4 M14.4,3.6 L11.6,6.4" stroke="#fff" stroke-width="1.1"/></svg>
<svg style="left:1681px;top:859px" width="16" height="16" viewBox="0 0 16 16"><g fill="#fff" stroke="#555" stroke-width="1.1"><rect x="5" y="1.4" width="3.5" height="7.5" rx="1.75"/><rect x="8.5" y="1.4" width="3.5" height="14" rx="1.75"/><rect x="1.4" y="5" width="14" height="3.5" rx="1.75"/><rect x="1.4" y="8.5" width="14" height="3.5" rx="1.75"/><rect x="5" y="8.5" width="3.5" height="7" rx="1.75"/></g></svg>
<svg style="left:1720px;top:857px" width="20" height="20" viewBox="0 0 20 20"><path d="M3,17 C6,11 10,5 17,2.5 C16,8 12,13 5,15.5 Z" fill="#9b6fd6"/><path d="M3,17 L14,6" stroke="#c7a6f0" stroke-width="0.8"/></svg>
<svg style="left:1761px;top:857px" width="17" height="20" viewBox="0 0 17 20"><path d="M3.5,6 C3.5,3.5 13.5,3.5 13.5,6 L12.8,17.5 L4.2,17.5 Z" fill="#2a2a2a"/><path d="M2.6,5.6 C4.5,1.8 12.5,1.8 14.4,5.6" stroke="#2a2a2a" stroke-width="1.8" fill="none"/><path d="M6.6,8.5 L6.6,15.5 M10.4,8.5 L10.4,15.5 M6.6,12 L10.4,12" stroke="#9a9a9a" stroke-width="1.1"/></svg>
<svg style="left:1601px;top:897px" width="20" height="19" viewBox="0 0 20 19"><path d="M9,1 L16,3.5 L16,9 C16,13 12.5,16 9,17.5 C5.5,16 2,13 2,9 L2,3.5 Z" fill="#1e88d8"/><path d="M9,1 L16,3.5 L16,9 C16,10 15.8,11 15.4,12 L9,12 Z" fill="#3ba6ee"/><path d="M13.5,10.5 L18.5,18.5 L8.5,18.5 Z" fill="#f2c230"/><path d="M13.5,13.2 L13.5,15.8" stroke="#333" stroke-width="1.2"/><circle cx="13.5" cy="17.2" r="0.6" fill="#333"/></svg>
<svg style="left:1643px;top:897px" width="14" height="19" viewBox="0 0 14 19"><rect x="1" y="1" width="12" height="17" rx="6" fill="#1b7fd8"/><path d="M4,6.6 L10,12.2 L7,14.8 L7,4.2 L10,6.8 L4,12.4" stroke="#fff" stroke-width="1.3" fill="none" stroke-linejoin="round"/></svg>
<div style="left:1910px;top:55px;width:5px;height:891px;background:#f4f4f4"></div>
<div style="left:1911px;top:66px;width:4px;height:249px;background:#b0b0b0"></div>
<div style="left:0;top:944px;width:1915px;height:1px;background:#b9c0cc"></div>
<div style="left:0;top:945px;width:1915px;height:1px;background:#e6edf8"></div>
</body></html>
